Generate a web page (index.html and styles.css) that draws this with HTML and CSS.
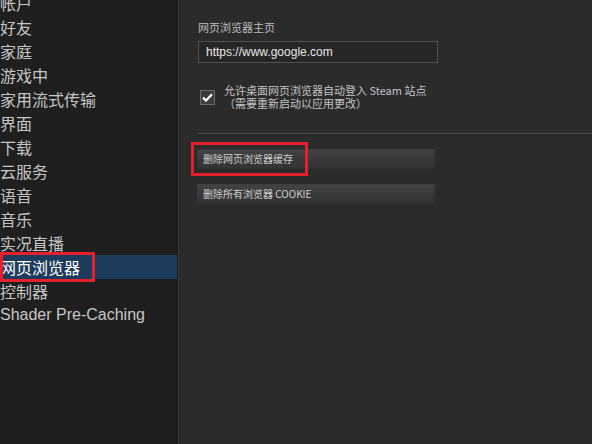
FILE: index.html
```html
<!DOCTYPE html>
<html lang="zh-CN">
<head>
<meta charset="utf-8">
<title>Steam 设置 - 网页浏览器</title>
<link rel="stylesheet" href="styles.css">
</head>
<body>
<div class="app">
  <nav class="sidebar">
    <ul class="menu">
      <li class="item">帐户</li>
      <li class="item">好友</li>
      <li class="item">家庭</li>
      <li class="item">游戏中</li>
      <li class="item">家用流式传输</li>
      <li class="item">界面</li>
      <li class="item">下载</li>
      <li class="item">云服务</li>
      <li class="item">语音</li>
      <li class="item">音乐</li>
      <li class="item">实况直播</li>
      <li class="item active">网页浏览器<span class="mark mark-nav"></span></li>
      <li class="item">控制器</li>
      <li class="item latin">Shader Pre-Caching</li>
    </ul>
  </nav>
  <main class="panel">
    <div class="label">网页浏览器主页</div>
    <div class="input">https://www.google.com</div>
    <div class="check-row">
      <span class="checkbox">
        <svg width="11" height="9" viewBox="0 0 11 9"><path d="M1 4.6 L4 7.5 L10 1.2" fill="none" stroke="#ffffff" stroke-width="2.2"/></svg>
      </span>
      <div class="check-text">
        <div class="line">允许桌面网页浏览器自动登入 Steam 站点</div>
        <div class="line">（需要重新启动以应用更改）</div>
      </div>
    </div>
    <div class="sep"></div>
    <div class="btn">删除网页浏览器缓存<span class="mark mark-btn"></span></div>
    <div class="btn">删除所有浏览器 COOKIE</div>
  </main>
</div>
</body>
</html>
```

FILE: styles.css
```css
html, body {
  margin: 0;
  padding: 0;
  width: 592px;
  height: 444px;
  overflow: hidden;
  background: #2b2b2b;
  font-family: "Liberation Sans", "Noto Sans CJK SC", sans-serif;
}

.app {
  display: flex;
  height: 444px;
}

.sidebar {
  width: 177px;
  flex: none;
  background: #1f1f1f;
  border-right: 1px solid #171717;
  box-shadow: 1px 0 0 #393939;
  margin-right: 1px;
}

.menu {
  list-style: none;
  margin: -9px 0 0 0;
  padding: 0;
}

.item {
  position: relative;
  height: 24px;
  line-height: 24px;
  font-size: 16px;
  color: #c6c6c6;
  padding-left: 0;
  white-space: nowrap;
  font-family: "Noto Sans CJK SC", "Liberation Sans", sans-serif;
}

.item.latin {
  font-family: "Liberation Sans", "Noto Sans CJK SC", sans-serif;
  font-size: 16px;
}

.item.active {
  background: #1d3b5c;
  color: #ffffff;
}

.mark {
  position: absolute;
  border: 3px solid #e3202b;
  pointer-events: none;
}

.mark-nav {
  left: 0;
  top: -3px;
  width: 89px;
  height: 24px;
}

.panel {
  flex: 1;
  padding: 19px 0 0 19px;
  display: flex;
  flex-direction: column;
  font-family: "Noto Sans CJK SC", "Liberation Sans", sans-serif;
}

.label {
  font-size: 11px;
  line-height: 16px;
  color: #bdbdbd;
  margin-left: 0;
}

.input {
  margin-top: 6px;
  width: 231px;
  height: 20px;
  border: 1px solid #505050;
  background: #262626;
  color: #e6e6e6;
  font-family: "Liberation Sans", sans-serif;
  font-size: 12px;
  line-height: 20px;
  padding-left: 7px;
  margin-left: 0;
}

.check-row {
  margin-top: 21px;
  display: flex;
  align-items: flex-start;
  margin-left: 2px;
}

.checkbox {
  width: 13px;
  height: 13px;
  margin-top: 6px;
  border: 1px solid #6a6a6a;
  background: #3c3c3c;
  display: flex;
  align-items: center;
  justify-content: center;
  flex: none;
}

.check-text {
  margin-left: 9px;
  font-size: 11px;
  line-height: 13px;
  color: #c4c4c4;
}

.line {
  white-space: nowrap;
}

.sep {
  margin-top: 23px;
  margin-left: -1px;
  height: 1px;
  background: #4c4c4c;
  box-shadow: 0 1px 0 #222222;
}

.btn {
  position: relative;
  margin-top: 15px;
  width: 234px;
  height: 20px;
  padding-left: 6px;
  margin-left: -1px;
  line-height: 20px;
  font-size: 10px;
  color: #cfcfcf;
  background: linear-gradient(to bottom, #444444, #393939 50%, #333333);
  box-shadow: inset -3px 0 3px -1px #2a2a2a;
}

.btn + .btn {
  margin-top: 15px;
}

.mark-btn {
  left: -6px;
  top: -7px;
  width: 111px;
  height: 28px;
}
```
